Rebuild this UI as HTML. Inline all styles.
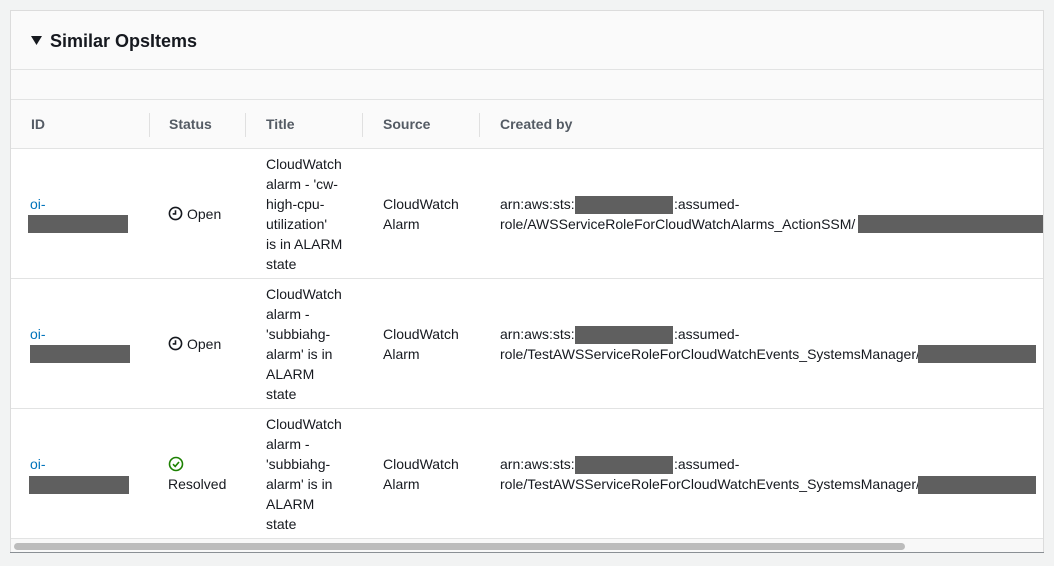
<!DOCTYPE html>
<html><head><meta charset="utf-8"><style>
body{margin:0;width:1054px;height:566px;background:#f2f3f3;font-family:"Liberation Sans",sans-serif;font-size:14px;color:#16191f;position:relative;overflow:hidden}
.card{position:absolute;left:10px;top:10px;width:1034px;height:543px;background:#fff;border:1px solid #dcdcdc;box-sizing:border-box;overflow:hidden}
.a{position:absolute;white-space:nowrap;line-height:20px}
.r{position:absolute;background:#5f5f5f;height:18px}
.ln{position:absolute;left:0;width:1054px;height:1px;background:#e2e3e3}
.th{font-weight:bold;color:#545b64}
.lk{color:#0073bb}
.dv{position:absolute;width:1px;height:24px;background:#e0e0e0;top:113px}
</style></head><body>
<div class="card"></div>
<div style="position:absolute;left:11px;top:11px;width:1032px;height:58px;background:#fafafa"></div>
<div class="ln" style="top:69px;left:11px;width:1032px"></div>
<div style="position:absolute;left:11px;top:70px;width:1032px;height:29px;background:#fafafa"></div>
<div class="ln" style="top:99px;left:11px;width:1032px"></div>
<div style="position:absolute;left:11px;top:100px;width:1032px;height:48px;background:#fafafa"></div>
<div class="ln" style="top:148px;left:11px;width:1032px"></div>
<div class="ln" style="top:278px;left:11px;width:1032px"></div>
<div class="ln" style="top:408px;left:11px;width:1032px"></div>
<div class="ln" style="top:538px;left:11px;width:1032px"></div>
<div style="position:absolute;left:11px;top:539px;width:1032px;height:13px;background:#f8f8f8"></div>
<div style="position:absolute;left:14px;top:543px;width:891px;height:7px;background:#bcbcbc;border-radius:4px"></div>
<div style="position:absolute;left:10px;top:552px;width:1034px;height:1px;background:#8a8f94"></div>

<svg style="position:absolute;left:31px;top:36px" width="11" height="9" viewBox="0 0 11 9"><path d="M0 0H11L5.5 9Z" fill="#16191f"/></svg>
<div class="a" style="left:50px;top:30px;font-size:18px;font-weight:bold;line-height:22px">Similar OpsItems</div>

<div class="a th" style="left:31px;top:114px">ID</div>
<div class="dv" style="left:149px"></div>
<div class="a th" style="left:169px;top:114px">Status</div>
<div class="dv" style="left:245px"></div>
<div class="a th" style="left:266px;top:114px">Title</div>
<div class="dv" style="left:362px"></div>
<div class="a th" style="left:383px;top:114px">Source</div>
<div class="dv" style="left:479px"></div>
<div class="a th" style="left:500px;top:114px">Created by</div>

<!-- row 1 -->
<div class="a lk" style="left:30px;top:194px">oi-</div>
<div class="r" style="left:28px;top:215px;width:100px"></div>
<svg style="position:absolute;left:168px;top:206px" width="15" height="15" viewBox="0 0 16 16"><circle cx="8" cy="8" r="6.5" fill="none" stroke="#16191f" stroke-width="1.7"/><path d="M8 4.5V8.5H5" fill="none" stroke="#16191f" stroke-width="1.7"/></svg>
<div class="a" style="left:187px;top:204px">Open</div>
<div class="a" style="left:266px;top:154px">CloudWatch<br>alarm - 'cw-<br>high-cpu-<br>utilization'<br>is in ALARM<br>state</div>
<div class="a" style="left:383px;top:194px">CloudWatch<br>Alarm</div>
<div class="a" style="left:500px;top:194px">arn:aws:sts:</div>
<div class="r" style="left:575px;top:196px;width:98px"></div>
<div class="a" style="left:674px;top:194px">:assumed-</div>
<div class="a" style="left:500px;top:214px">role/AWSServiceRoleForCloudWatchAlarms_ActionSSM/</div>
<div class="r" style="left:858px;top:215px;width:185px"></div>

<!-- row 2 -->
<div class="a lk" style="left:30px;top:324px">oi-</div>
<div class="r" style="left:30px;top:345px;width:100px"></div>
<svg style="position:absolute;left:168px;top:336px" width="15" height="15" viewBox="0 0 16 16"><circle cx="8" cy="8" r="6.5" fill="none" stroke="#16191f" stroke-width="1.7"/><path d="M8 4.5V8.5H5" fill="none" stroke="#16191f" stroke-width="1.7"/></svg>
<div class="a" style="left:187px;top:334px">Open</div>
<div class="a" style="left:266px;top:284px">CloudWatch<br>alarm -<br>'subbiahg-<br>alarm' is in<br>ALARM<br>state</div>
<div class="a" style="left:383px;top:324px">CloudWatch<br>Alarm</div>
<div class="a" style="left:500px;top:324px">arn:aws:sts:</div>
<div class="r" style="left:575px;top:326px;width:98px"></div>
<div class="a" style="left:674px;top:324px">:assumed-</div>
<div class="a" style="left:500px;top:344px">role/TestAWSServiceRoleForCloudWatchEvents_SystemsManager/</div>
<div class="r" style="left:918px;top:345px;width:118px"></div>

<!-- row 3 -->
<div class="a lk" style="left:30px;top:454px">oi-</div>
<div class="r" style="left:29px;top:476px;width:100px"></div>
<svg style="position:absolute;left:168px;top:456px" width="16" height="16" viewBox="0 0 16 16"><circle cx="8" cy="8" r="6.5" fill="none" stroke="#1d8102" stroke-width="1.6"/><path d="M5 8.2L7.2 10.4 11 6" fill="none" stroke="#1d8102" stroke-width="1.6"/></svg>
<div class="a" style="left:168px;top:474px">Resolved</div>
<div class="a" style="left:266px;top:414px">CloudWatch<br>alarm -<br>'subbiahg-<br>alarm' is in<br>ALARM<br>state</div>
<div class="a" style="left:383px;top:454px">CloudWatch<br>Alarm</div>
<div class="a" style="left:500px;top:454px">arn:aws:sts:</div>
<div class="r" style="left:575px;top:456px;width:98px"></div>
<div class="a" style="left:674px;top:454px">:assumed-</div>
<div class="a" style="left:500px;top:474px">role/TestAWSServiceRoleForCloudWatchEvents_SystemsManager/</div>
<div class="r" style="left:918px;top:476px;width:118px"></div>
</body></html>
